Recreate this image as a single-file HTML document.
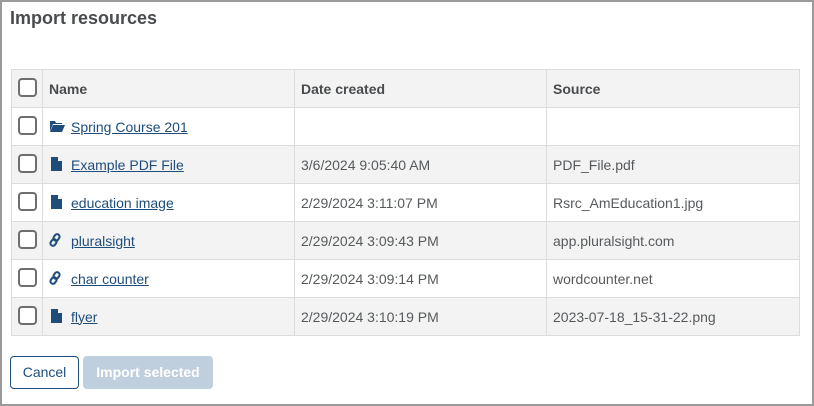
<!DOCTYPE html>
<html><head><style>
*{box-sizing:border-box;margin:0;padding:0}
html,body{width:814px;height:406px;overflow:hidden;background:#fff;font-family:"Liberation Sans",sans-serif;}
.frame{position:absolute;left:0;top:0;width:814px;height:406px;border:2px solid #9a9a9a;}
h1{position:absolute;left:10px;top:8px;font-size:18px;font-weight:bold;color:#494c4e;}
table{position:absolute;left:11px;top:69px;width:789px;border-collapse:collapse;font-size:14px;color:#565a5c;}
td,th{border:1px solid #dcdcdc;height:38px;text-align:left;vertical-align:middle;padding:0 0 0 6px;}
th{font-weight:bold;background:#f3f3f3;color:#494c4e}
tr.g td{background:#f3f3f3}
td.c,th.c{width:31px;padding:0 0 0 6px}
.cb{display:inline-block;width:19px;height:19px;border:2px solid #6e6e6e;border-radius:4px;background:#fff;vertical-align:middle;margin-top:-2px}
a{color:#1e4d7b;text-decoration:underline;}
.ic{display:inline-block;width:16px;margin-right:6px;vertical-align:middle;margin-top:-4px}
.btn{position:absolute;top:356px;height:33px;font-size:14px;border-radius:4px;line-height:33px;text-align:center}
</style></head><body>
<div class="frame"></div>
<h1>Import resources</h1>
<table>
<tr><th class="c"><span class="cb"></span></th><th style="width:252px">Name</th><th style="width:252px">Date created</th><th>Source</th></tr>
<tr><td class="c"><span class="cb"></span></td><td><svg class="ic" width="16" height="12" viewBox="0 0 16 12"><path d="M1 1h5l1 2h6v1H4L1 11z" fill="#1e4d7b"/><path d="M4 5h12l-3 7H1z" fill="#1e4d7b"/></svg><a>Spring Course 201</a></td><td></td><td></td></tr>
<tr class="g"><td class="c"><span class="cb"></span></td><td><svg class="ic" width="16" height="14" viewBox="0 0 16 14"><path d="M2 0h7l4 4v10H2z" fill="#1e4d7b"/><path d="M9 0v4h4" fill="#fff"/></svg><a>Example PDF File</a></td><td>3/6/2024 9:05:40 AM</td><td>PDF_File.pdf</td></tr>
<tr><td class="c"><span class="cb"></span></td><td><svg class="ic" width="16" height="14" viewBox="0 0 16 14"><path d="M2 0h7l4 4v10H2z" fill="#1e4d7b"/><path d="M9 0v4h4" fill="#fff"/></svg><a>education image</a></td><td>2/29/2024 3:11:07 PM</td><td>Rsrc_AmEducation1.jpg</td></tr>
<tr class="g"><td class="c"><span class="cb"></span></td><td><svg class="ic" width="16" height="14" viewBox="0 0 16 14"><g fill="none" stroke="#1e4d7b" stroke-width="2"><rect x="5" y="1" width="5" height="7" rx="2.5" transform="rotate(35 7.5 4.5)"/><rect x="2" y="6" width="5" height="7" rx="2.5" transform="rotate(35 4.5 9.5)"/></g></svg><a>pluralsight</a></td><td>2/29/2024 3:09:43 PM</td><td>app.pluralsight.com</td></tr>
<tr><td class="c"><span class="cb"></span></td><td><svg class="ic" width="16" height="14" viewBox="0 0 16 14"><g fill="none" stroke="#1e4d7b" stroke-width="2"><rect x="5" y="1" width="5" height="7" rx="2.5" transform="rotate(35 7.5 4.5)"/><rect x="2" y="6" width="5" height="7" rx="2.5" transform="rotate(35 4.5 9.5)"/></g></svg><a>char counter</a></td><td>2/29/2024 3:09:14 PM</td><td>wordcounter.net</td></tr>
<tr class="g"><td class="c"><span class="cb"></span></td><td><svg class="ic" width="16" height="14" viewBox="0 0 16 14"><path d="M2 0h7l4 4v10H2z" fill="#1e4d7b"/><path d="M9 0v4h4" fill="#fff"/></svg><a>flyer</a></td><td>2/29/2024 3:10:19 PM</td><td>2023-07-18_15-31-22.png</td></tr>
</table>
<div class="btn" style="left:10px;width:69px;border:1px solid #1e4d7b;color:#1e4d7b;background:#fff;line-height:31px">Cancel</div>
<div class="btn" style="left:83px;width:130px;background:#c0cfdd;color:#fff;font-weight:bold">Import selected</div>
</body></html>
